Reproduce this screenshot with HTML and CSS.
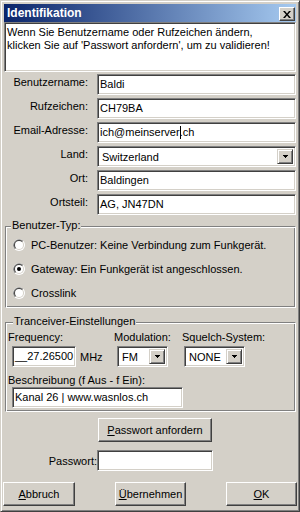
FILE: index.html
```html
<!DOCTYPE html>
<html lang="de">
<head>
<meta charset="utf-8">
<title>Identifikation</title>
<link rel="stylesheet" href="styles.css">
</head>
<body>
<div class="window">
  <div class="titlebar">
    <span class="title">Identifikation</span>
    <span class="close"><svg width="8" height="7" viewBox="0 0 8 7"><path d="M0 0h2l2 2.4 2-2.4h2l-3 3.5 3 3.5h-2l-2-2.4-2 2.4h-2l3-3.5z" fill="#000"/></svg></span>
  </div>
  <div class="client">
    <div class="notice">Wenn Sie Benutzername oder Rufzeichen ändern,<br>klicken Sie auf 'Passwort anfordern', um zu validieren!</div>

    <div class="fields">
      <div class="row"><span class="lab">Benutzername:</span><div class="edit">Baldi</div></div>
      <div class="row"><span class="lab">Rufzeichen:</span><div class="edit">CH79BA</div></div>
      <div class="row"><span class="lab">Email-Adresse:</span><div class="edit">ich@meinserver<span class="caret"></span>.ch</div></div>
      <div class="row"><span class="lab">Land:</span>
        <div class="combo"><span class="combo-text">Switzerland</span><span class="drop"><svg width="5" height="3" viewBox="0 0 5 3"><path d="M0 0h5v1h-1v1h-1v1h-1v-1h-1v-1h-1z" fill="#000"/></svg></span></div>
      </div>
      <div class="row"><span class="lab">Ort:</span><div class="edit">Baldingen</div></div>
      <div class="row"><span class="lab">Ortsteil:</span><div class="edit">AG, JN47DN</div></div>
    </div>

    <div class="group type">
      <div class="legend">Benutzer-Typ:</div>
      <div class="radios">
        <div class="radio">
          <svg class="rb" width="12" height="12" viewBox="0 0 12 12"><circle cx="6" cy="6" r="6" fill="#fff"/><path d="M1.76 10.24A6 6 0 0 1 10.24 1.76Z" fill="#808080"/><circle cx="6" cy="6" r="5" fill="#d4d0c8"/><path d="M2.46 9.54A5 5 0 0 1 9.54 2.46Z" fill="#404040"/><circle cx="6" cy="6" r="4" fill="#fff"/></svg>
          <span>PC-Benutzer: Keine Verbindung zum Funkgerät.</span>
        </div>
        <div class="radio">
          <svg class="rb" width="12" height="12" viewBox="0 0 12 12"><circle cx="6" cy="6" r="6" fill="#fff"/><path d="M1.76 10.24A6 6 0 0 1 10.24 1.76Z" fill="#808080"/><circle cx="6" cy="6" r="5" fill="#d4d0c8"/><path d="M2.46 9.54A5 5 0 0 1 9.54 2.46Z" fill="#404040"/><circle cx="6" cy="6" r="4" fill="#fff"/><circle cx="6" cy="6" r="2" fill="#000"/></svg>
          <span>Gateway: Ein Funkgerät ist angeschlossen.</span>
        </div>
        <div class="radio">
          <svg class="rb" width="12" height="12" viewBox="0 0 12 12"><circle cx="6" cy="6" r="6" fill="#fff"/><path d="M1.76 10.24A6 6 0 0 1 10.24 1.76Z" fill="#808080"/><circle cx="6" cy="6" r="5" fill="#d4d0c8"/><path d="M2.46 9.54A5 5 0 0 1 9.54 2.46Z" fill="#404040"/><circle cx="6" cy="6" r="4" fill="#fff"/></svg>
          <span>Crosslink</span>
        </div>
      </div>
    </div>

    <div class="group trx">
      <div class="legend">Tranceiver-Einstellungen</div>
      <div class="trx-cols">
        <div class="col c-freq">
          <div class="lbl">Frequency:</div>
          <div class="ctl"><div class="edit freq">__27.26500</div><span class="unit">MHz</span></div>
        </div>
        <div class="col c-mod">
          <div class="lbl">Modulation:</div>
          <div class="ctl"><div class="combo mod"><span class="combo-text">FM</span><span class="drop"><svg width="5" height="3" viewBox="0 0 5 3"><path d="M0 0h5v1h-1v1h-1v1h-1v-1h-1v-1h-1z" fill="#000"/></svg></span></div></div>
        </div>
        <div class="col c-sq">
          <div class="lbl">Squelch-System:</div>
          <div class="ctl"><div class="combo sq"><span class="combo-text">NONE</span><span class="drop"><svg width="5" height="3" viewBox="0 0 5 3"><path d="M0 0h5v1h-1v1h-1v1h-1v-1h-1v-1h-1z" fill="#000"/></svg></span></div></div>
        </div>
      </div>
      <div class="lbl desc-lbl">Beschreibung (f Aus - f Ein):</div>
      <div class="edit desc">Kanal 26 | www.wasnlos.ch</div>
    </div>

    <div class="request"><button class="btn req"><u>P</u>asswort anfordern</button></div>

    <div class="pwrow"><span class="pw-lab">Passwort:</span><div class="edit pw"></div></div>

    <div class="actions">
      <button class="btn b-cancel"><u>A</u>bbruch</button>
      <button class="btn b-apply"><u>Ü</u>bernehmen</button>
      <button class="btn b-ok"><u>O</u>K</button>
    </div>
  </div>
</div>
</body>
</html>
```

FILE: styles.css
```css
html, body {
  margin: 0;
  padding: 0;
  background: #d4d0c8;
}

.window {
  width: 300px;
  height: 512px;
  box-sizing: border-box;
  background: #d4d0c8;
  border: 1px solid;
  border-color: #d4d0c8 #404040 #404040 #d4d0c8;
  box-shadow: inset 1px 1px #fff, inset -1px -1px #808080;
  padding: 3px;
  font: 11px "Liberation Sans", Arial, sans-serif;
  color: #000;
}

.titlebar {
  height: 18px;
  display: flex;
  align-items: center;
  justify-content: space-between;
  padding: 0 1px 0 3px;
  background: linear-gradient(90deg, #0a246a, #a6caf0);
}

.title {
  color: #fff;
  font-weight: bold;
  font-size: 12px;
}

.close {
  width: 16px;
  height: 14px;
  box-sizing: border-box;
  margin-top: 2px;
  background: #d4d0c8;
  border: 1px solid;
  border-color: #fff #404040 #404040 #fff;
  box-shadow: inset -1px -1px #808080;
  display: flex;
  align-items: center;
  justify-content: center;
}

.notice {
  height: 50px;
  box-sizing: border-box;
  background: #fff;
  border: 1px solid;
  border-color: #808080 #fff #fff #808080;
  box-shadow: inset 1px 1px #404040, inset -1px -1px #d4d0c8;
  padding: 3px 2px;
  line-height: 13px;
}

.edit {
  box-sizing: border-box;
  height: 21px;
  background: #fff;
  border: 1px solid;
  border-color: #808080 #fff #fff #808080;
  box-shadow: inset 1px 1px #404040, inset -1px -1px #d4d0c8;
  padding: 0 2px 0 2px;
  line-height: 19px;
  white-space: nowrap;
  overflow: hidden;
}

.caret {
  display: inline-block;
  width: 1px;
  height: 13px;
  background: #000;
  vertical-align: -3px;
  margin-right: -1px;
}

.fields {
  display: flex;
  flex-direction: column;
  gap: 3px;
  margin-top: 2px;
}

.row {
  display: flex;
  gap: 9px;
}

.lab {
  width: 84px;
  flex: none;
  text-align: right;
  padding-top: 2px;
  line-height: 13px;
}

.row .edit,
.row .combo {
  flex: 1;
}

.combo {
  box-sizing: border-box;
  height: 21px;
  background: #fff;
  border: 1px solid;
  border-color: #808080 #fff #fff #808080;
  box-shadow: inset 1px 1px #404040, inset -1px -1px #d4d0c8;
  padding: 2px 2px 2px 2px;
  display: flex;
  align-items: center;
  justify-content: space-between;
}

.combo-text {
  padding-left: 2px;
}

.drop {
  width: 16px;
  height: 15px;
  box-sizing: border-box;
  background: #d4d0c8;
  border: 1px solid;
  border-color: #d4d0c8 #404040 #404040 #d4d0c8;
  box-shadow: inset 1px 1px #fff, inset -1px -1px #808080;
  display: flex;
  align-items: center;
  justify-content: center;
}

.group {
  width: 291px;
  box-sizing: border-box;
  margin-left: 1px;
  border: 1px solid;
  border-color: #808080 #fff #fff #808080;
  box-shadow: inset 1px 1px #fff, inset -1px -1px #808080;
}

.legend {
  width: max-content;
  margin: -8px 0 0 5px;
  padding: 0 1px;
  background: #d4d0c8;
  line-height: 13px;
}

.type {
  margin-top: 11px;
  padding-bottom: 2px;
}

.radios {
  margin-top: 1px;
}

.radio {
  height: 24px;
  display: flex;
  align-items: center;
  gap: 6px;
  padding-left: 7px;
}

.rb {
  flex: none;
}

.trx {
  margin-top: 14px;
  padding: 0 0 3px 2px;
}

.trx-cols {
  display: flex;
  margin-top: 3px;
}

.lbl {
  line-height: 13px;
}

.ctl {
  display: flex;
  align-items: center;
  margin-top: 2px;
}

.c-freq { width: 106px; }
.c-mod { width: 68px; }

.freq {
  width: 64px;
  margin-left: 4px;
  padding-left: 2px;
}

.unit {
  margin-left: 4px;
}

.mod {
  width: 51px;
  margin-left: 3px;
}

.sq {
  width: 61px;
  margin-left: 2px;
}

.desc-lbl {
  margin-top: 7px;
}

.desc {
  width: 171px;
  margin-left: 4px;
}

.btn {
  font: inherit;
  color: #000;
  background: #d4d0c8;
  border: 1px solid;
  border-color: #fff #404040 #404040 #fff;
  box-shadow: inset -1px -1px #808080;
  padding: 0;
  height: 24px;
  box-sizing: border-box;
}

.request {
  margin-top: 6px;
  padding-left: 94px;
}

.req {
  width: 114px;
}

.pwrow {
  display: flex;
  align-items: center;
  margin-top: 8px;
}

.pw-lab {
  width: 93px;
  text-align: right;
}

.pw {
  width: 116px;
}

.actions {
  display: flex;
  justify-content: space-between;
  margin: 11px -1px 0 -1px;
}

.b-cancel { width: 72px; }
.b-apply { width: 71px; }
.b-ok { width: 71px; }
```
